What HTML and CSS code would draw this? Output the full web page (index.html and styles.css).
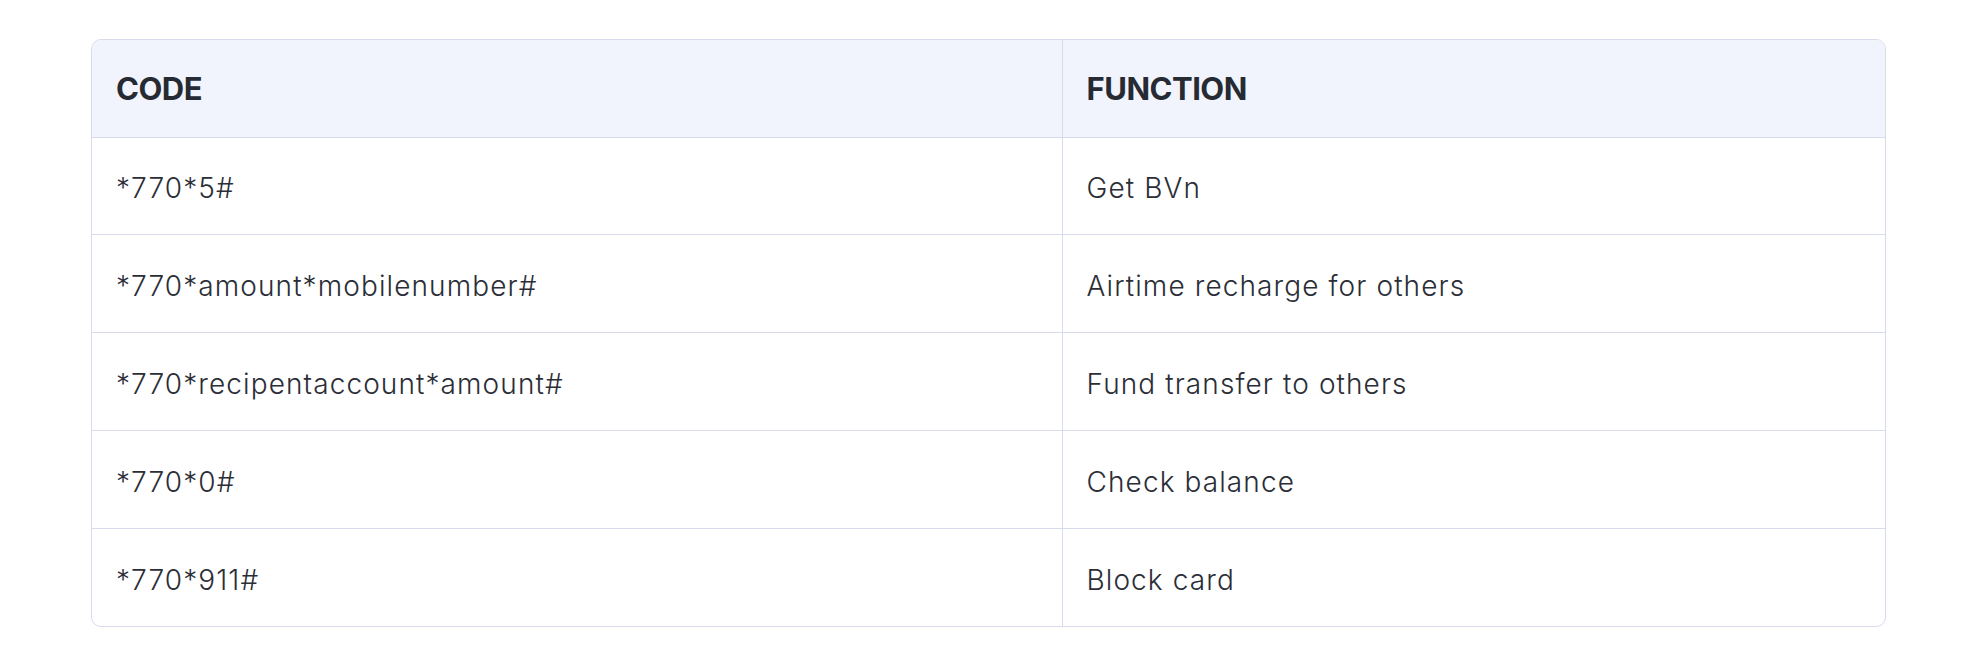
FILE: index.html
```html
<!DOCTYPE html>
<html lang="en">
<head>
<meta charset="utf-8">
<title>USSD codes</title>
<link rel="stylesheet" href="styles.css">
</head>
<body>
<div class="page">
  <div class="table-wrap">
    <table class="codes">
      <thead>
        <tr><th class="col-code">CODE</th><th>FUNCTION</th></tr>
      </thead>
      <tbody>
        <tr><td>*770*5#</td><td>Get BVn</td></tr>
        <tr><td>*770*amount*mobilenumber#</td><td>Airtime recharge for others</td></tr>
        <tr><td>*770*recipentaccount*amount#</td><td>Fund transfer to others</td></tr>
        <tr><td>*770*0#</td><td>Check balance</td></tr>
        <tr><td>*770*911#</td><td>Block card</td></tr>
      </tbody>
    </table>
  </div>
</div>
</body>
</html>
```

FILE: styles.css
```css
html, body {
  margin: 0;
  padding: 0;
  background: #ffffff;
}
.page {
  padding: 39px 0 0 91px;
}
.table-wrap {
  width: 1795px;
  border: 1px solid #d7dbec;
  border-radius: 10px;
  overflow: hidden;
  box-sizing: border-box;
}
.codes {
  width: 100%;
  border-collapse: collapse;
  border-spacing: 0;
  font-family: "Inter", "Liberation Sans", sans-serif;
  font-feature-settings: "calt" 0;
  color: #2b2e37;
}
.codes th,
.codes td {
  padding: 0 24px;
  text-align: left;
  vertical-align: middle;
  box-sizing: border-box;
}
.codes th {
  height: 97px;
  background: #f1f4fd;
  font-weight: 700;
  font-size: 31px;
  letter-spacing: -0.5px;
  color: #262a33;
  border-bottom: 1px solid #d7dbec;
}
.codes td {
  height: 98px;
  padding-top: 5px;
  font-weight: 300;
  font-size: 28px;
  letter-spacing: 1.1px;
  border-top: 1px solid #d7dbec;
}
.codes tbody tr:first-child td {
  border-top: none;
  height: 97px;
}
.codes .col-code {
  width: 970px;
}
.codes th + th,
.codes td + td {
  border-left: 1px solid #d7dbec;
}
```
